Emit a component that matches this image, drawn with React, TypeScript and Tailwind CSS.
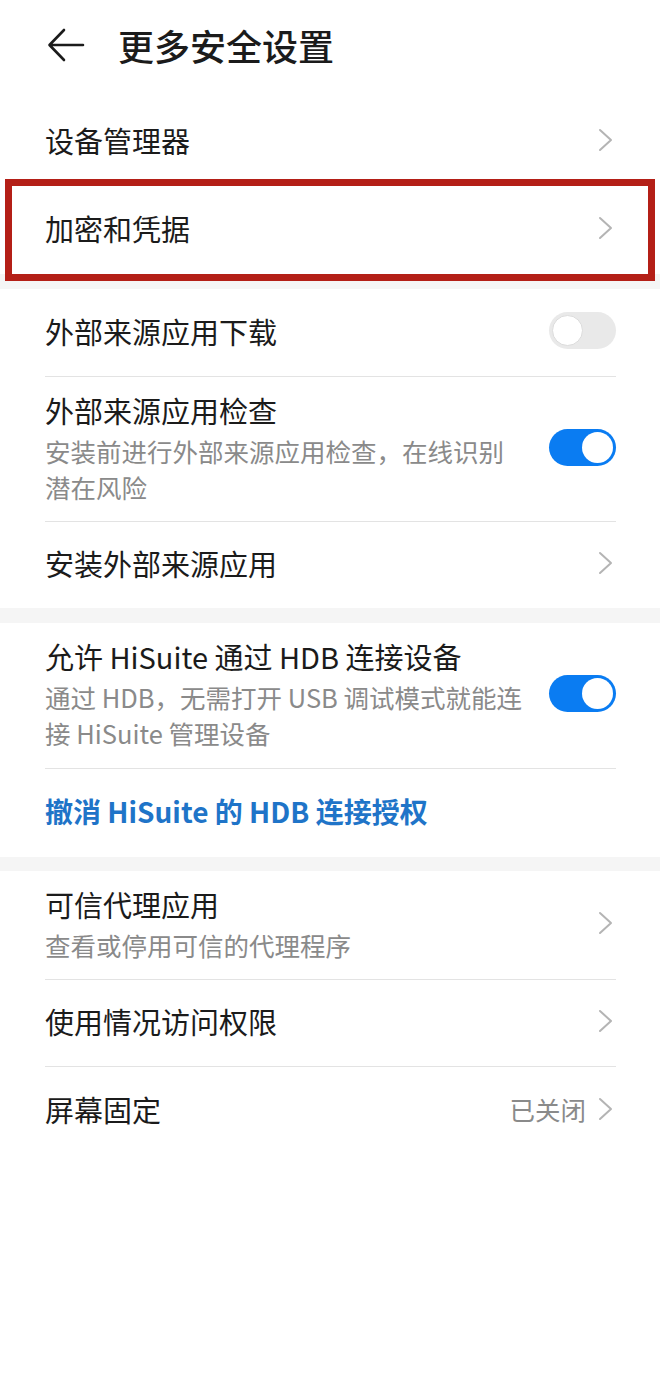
import type { ReactNode } from 'react';

const font = { fontFamily: '"Noto Sans CJK SC", "Noto Sans", sans-serif' };

function Chevron() {
  return (
    <svg width="20" height="26" viewBox="0 0 20 26" className="shrink-0">
      <path d="M4 3 L15 13 L4 23" fill="none" stroke="#b4b4b4" strokeWidth="2" strokeLinecap="round" strokeLinejoin="round" />
    </svg>
  );
}

function Toggle({ on }: { on: boolean }) {
  return on ? (
    <div className="flex h-[37px] w-[67px] shrink-0 items-center justify-end rounded-full bg-[#0a7cf2] p-[3px]">
      <div className="h-[31px] w-[31px] rounded-full bg-white" />
    </div>
  ) : (
    <div className="flex h-[37px] w-[67px] shrink-0 items-center rounded-full bg-[#e9e9e9] p-[3px]">
      <div className="h-[31px] w-[31px] rounded-full border border-[#dcdcdc] bg-white" />
    </div>
  );
}

function Row({ title, sub, right, h }: { title: ReactNode; sub?: string; right?: ReactNode; h: string }) {
  return (
    <div className={`flex items-center justify-between pb-[4px] pl-[45px] pr-[44px] ${h}`}>
      <div className="max-w-[482px]">
        <div className="text-[29px] leading-[40px] text-[#1b1b1b]">{title}</div>
        {sub && <div className="mt-[3px] text-[25.5px] leading-[36px] text-[#8a8a8a]">{sub}</div>}
      </div>
      {right}
    </div>
  );
}

function Divider() {
  return <div className="mx-[44px] ml-[45px] h-px bg-[#e3e3e3]" />;
}

function Gap() {
  return <div className="h-[15px] bg-[#f5f5f5]" />;
}

export default function App() {
  return (
    <div className="min-h-[1375px] w-[660px] bg-white" style={font}>
      <div className="flex h-[98px] items-center pb-[8px]">
        <svg width="40" height="36" viewBox="0 0 40 36" className="ml-[46px]">
          <path d="M4 18 H37 M18 3 L3.5 18 L18 33" fill="none" stroke="#1b1b1b" strokeWidth="2.6" strokeLinecap="round" strokeLinejoin="round" />
        </svg>
        <div className="ml-[32px] text-[36px] font-medium leading-[44px] text-[#1b1b1b]">更多安全设置</div>
      </div>

      <Row h="h-[88px]" title="设备管理器" right={<Chevron />} />
      <div className="relative">
        <Row h="h-[88px]" title="加密和凭据" right={<Chevron />} />
        <div className="absolute inset-x-[5px] top-[-7px] bottom-[-7px] border-[7px] border-[#b41f17]" />
      </div>
      <Gap />

      <Row h="h-[87px]" title="外部来源应用下载" right={<Toggle on={false} />} />
      <Divider />
      <Row h="h-[144px]" title="外部来源应用检查" sub="安装前进行外部来源应用检查，在线识别潜在风险" right={<Toggle on />} />
      <Divider />
      <Row h="h-[86px]" title="安装外部来源应用" right={<Chevron />} />
      <Gap />

      <Row h="h-[145px]" title="允许 HiSuite 通过 HDB 连接设备" sub="通过 HDB，无需打开 USB 调试模式就能连接 HiSuite 管理设备" right={<Toggle on />} />
      <Divider />
      <div className="flex h-[88px] items-center pb-[4px] pl-[45px]">
        <div className="text-[28px] font-semibold leading-[40px] text-[#1f74c8]">撤消 HiSuite 的 HDB 连接授权</div>
      </div>
      <div className="h-[14px] bg-[#f5f5f5]" />

      <Row h="h-[108px]" title="可信代理应用" sub="查看或停用可信的代理程序" right={<Chevron />} />
      <Divider />
      <Row h="h-[86px]" title="使用情况访问权限" right={<Chevron />} />
      <Divider />
      <Row
        h="h-[88px]"
        title="屏幕固定"
        right={
          <div className="flex items-center gap-[10px]">
            <span className="text-[25.5px] leading-[36px] text-[#8a8a8a]">已关闭</span>
            <Chevron />
          </div>
        }
      />
    </div>
  );
}
